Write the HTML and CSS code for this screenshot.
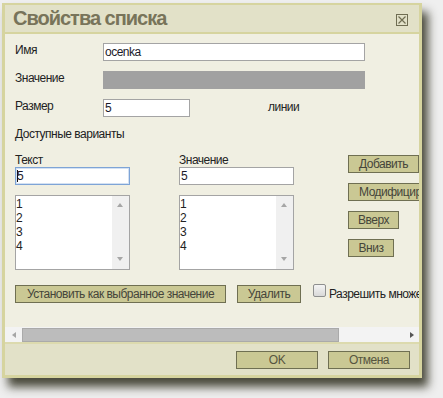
FILE: index.html
```html
<!DOCTYPE html>
<html lang="ru">
<head>
  <meta charset="UTF-8">
  <title>Свойства списка</title>
  <link rel="stylesheet" href="styles.css">
</head>
<body>
  <div class="dialog">
    <div class="titlebar">
      <h1>Свойства списка</h1>
      <svg class="close" width="12" height="12" viewBox="0 0 12 12">
        <rect x="0.5" y="0.5" width="11" height="11" fill="none" stroke="#6f6d52"/>
        <path d="M2.5 2.5 L9.5 9.5 M9.5 2.5 L2.5 9.5" stroke="#6f6d52" stroke-width="1.2"/>
      </svg>
    </div>

    <div class="body">
      <div class="content">
        <div class="row">
          <label class="lbl">Имя</label>
          <div class="field wide">ocenka</div>
        </div>
        <div class="row">
          <label class="lbl">Значение</label>
          <div class="field wide disabled"></div>
        </div>
        <div class="row">
          <label class="lbl">Размер</label>
          <div class="field small">5</div>
          <span class="unit">линии</span>
        </div>
        <div class="caption">Доступные варианты</div>

        <div class="lists">
          <div class="col">
            <div class="col-label">Текст</div>
            <div class="field col-field focused"><span class="caret"></span>5</div>
            <div class="listbox">
              <div class="items">
                <div>1</div><div>2</div><div>3</div><div>4</div>
              </div>
              <div class="vscroll"><span class="arr-up"></span><span class="arr-down"></span></div>
            </div>
          </div>
          <div class="col col-b">
            <div class="col-label">Значение</div>
            <div class="field col-field">5</div>
            <div class="listbox">
              <div class="items">
                <div>1</div><div>2</div><div>3</div><div>4</div>
              </div>
              <div class="vscroll"><span class="arr-up"></span><span class="arr-down"></span></div>
            </div>
          </div>
          <div class="actions">
            <button class="btn w-add">Добавить</button>
            <button class="btn w-mod">Модифицировать</button>
            <button class="btn w-up">Вверх</button>
            <button class="btn w-down">Вниз</button>
          </div>
        </div>

        <div class="bottom-row">
          <button class="btn w-set">Установить как выбранное значение</button>
          <button class="btn w-del">Удалить</button>
          <span class="check"></span>
          <span class="check-text">Разрешить множественный выбор</span>
        </div>
      </div>

      <div class="hscroll">
        <span class="arr-left"></span>
        <span class="thumb"></span>
        <span class="arr-right"></span>
      </div>
    </div>

    <div class="footer">
      <button class="btn w-foot">OK</button>
      <button class="btn w-foot">Отмена</button>
    </div>
  </div>
</body>
</html>
```

FILE: styles.css
```css
html, body { height: 100%; }
body {
  margin: 0;
  padding-top: 3px;
  box-sizing: border-box;
  background: #efefef;
  font-family: "Liberation Sans", Arial, sans-serif;
  font-size: 12px;
  letter-spacing: -0.5px;
  color: #222;
}
.dialog {
  width: 414px;
  margin-left: 2px;
  border: 3px solid #d6d49f;
  border-top-width: 2px;
  background: #f0efe2;
  box-shadow: 6px 9px 9px rgba(55, 55, 40, 0.9);
}
.titlebar {
  height: 27px;
  background: #e2e1c8;
  border-bottom: 2px solid #d6d49f;
  display: flex;
  align-items: center;
  justify-content: space-between;
  padding: 0 11px 0 8px;
}
.titlebar h1 {
  margin: 0;
  font-size: 20px;
  line-height: 27px;
  letter-spacing: -1px;
  color: #78745a;
}
.close { margin-top: 2px; }

.body { height: 308px; display: flex; flex-direction: column; }
.content {
  flex: 1;
  overflow: hidden;
  padding: 9px 0 0 10px;
  white-space: nowrap;
}
.content * { flex-shrink: 0; }
.row { display: flex; align-items: flex-start; height: 18px; margin-bottom: 10px; }
.lbl { width: 88px; line-height: 14px; }
.unit { margin-left: 78px; line-height: 14px; padding-top: 1px; color: #222; }
.caption { line-height: 14px; }

.field {
  box-sizing: border-box;
  height: 18px;
  border: 1px solid #a4a4a4;
  background: #fff;
  line-height: 16px;
  padding: 0 1px;
  color: #1a1a2a;
}
.field.wide { width: 262px; }
.field.small { width: 87px; }
.field.disabled { background: #a1a1a1; border-color: #a1a1a1; }
.field.focused { border-color: #7ea4d6; box-shadow: inset 0 0 0 1px #d3e1f3; }
.caret { display: inline-block; width: 1px; height: 12px; background: #111; vertical-align: -2px; margin-right: -1px; }

.lists { display: flex; align-items: flex-start; margin-top: 13px; }
.col { width: 115px; }
.col-b { margin-left: 49px; }
.col-label { line-height: 13px; }
.col-field { width: 115px; }
.listbox {
  box-sizing: border-box;
  width: 115px;
  height: 75px;
  margin-top: 10px;
  border: 1px solid #a4a4a4;
  background: #fff;
  display: flex;
}
.items { flex: 1; line-height: 14px; padding-top: 1px; }
.vscroll { width: 17px; background: #f0f0f0; position: relative; }
.arr-up, .arr-down {
  position: absolute;
  left: 5px;
  width: 0; height: 0;
  border-left: 3.5px solid transparent;
  border-right: 3.5px solid transparent;
}
.arr-up { top: 7px; border-bottom: 4px solid #a6a6a6; }
.arr-down { bottom: 8px; border-top: 4px solid #a6a6a6; }

.actions { margin-left: 54px; margin-top: 1px; display: flex; flex-direction: column; align-items: flex-start; gap: 10px; }
.btn {
  box-sizing: border-box;
  height: 18px;
  padding: 0;
  border: 1px solid #6f6f52;
  background: #cac894;
  font-family: "Liberation Sans", Arial, sans-serif;
  font-size: 12px;
  letter-spacing: -0.5px;
  color: #45453a;
  text-align: center;
  white-space: nowrap;
  overflow: hidden;
}
.w-add { width: 71px; }
.w-mod { width: 82px; text-align: left; padding-left: 10px; }
.w-up { width: 51px; }
.w-down { width: 46px; }
.w-set { width: 211px; }
.w-del { width: 64px; margin-left: 11px; }
.w-foot { width: 82px; color: #56553f; }

.bottom-row { display: flex; align-items: flex-start; margin-top: 15px; }
.check {
  box-sizing: border-box;
  width: 13px; height: 13px;
  margin: -1px 2px 0 12px;
  border: 1px solid #8e8f8f;
  border-radius: 2px;
  background: linear-gradient(#f4f4f4, #d9d9d9);
}
.check-text { line-height: 14px; margin-left: 1px; padding-top: 2px; }

.hscroll { height: 15px; background: #f3f3f3; display: flex; align-items: center; }
.arr-left {
  width: 0; height: 0;
  margin-left: 7px;
  border-top: 3.5px solid transparent;
  border-bottom: 3.5px solid transparent;
  border-right: 4px solid #a6a6a6;
}
.thumb {
  box-sizing: border-box;
  width: 317px; height: 14px;
  margin-left: 6px;
  background: #bcbcbc;
  border: 1px solid #aaaaaa;
  align-self: flex-end;
}
.arr-right {
  width: 0; height: 0;
  margin-left: 71px;
  border-top: 3.5px solid transparent;
  border-bottom: 3.5px solid transparent;
  border-left: 4px solid #555;
}

.footer {
  box-sizing: border-box;
  height: 33px;
  border-top: 2px solid #dcdaae;
  background: #e2e1c8;
  display: flex;
  justify-content: flex-end;
  align-items: flex-start;
  gap: 10px;
  padding: 7px 9px 0 0;
}
```
